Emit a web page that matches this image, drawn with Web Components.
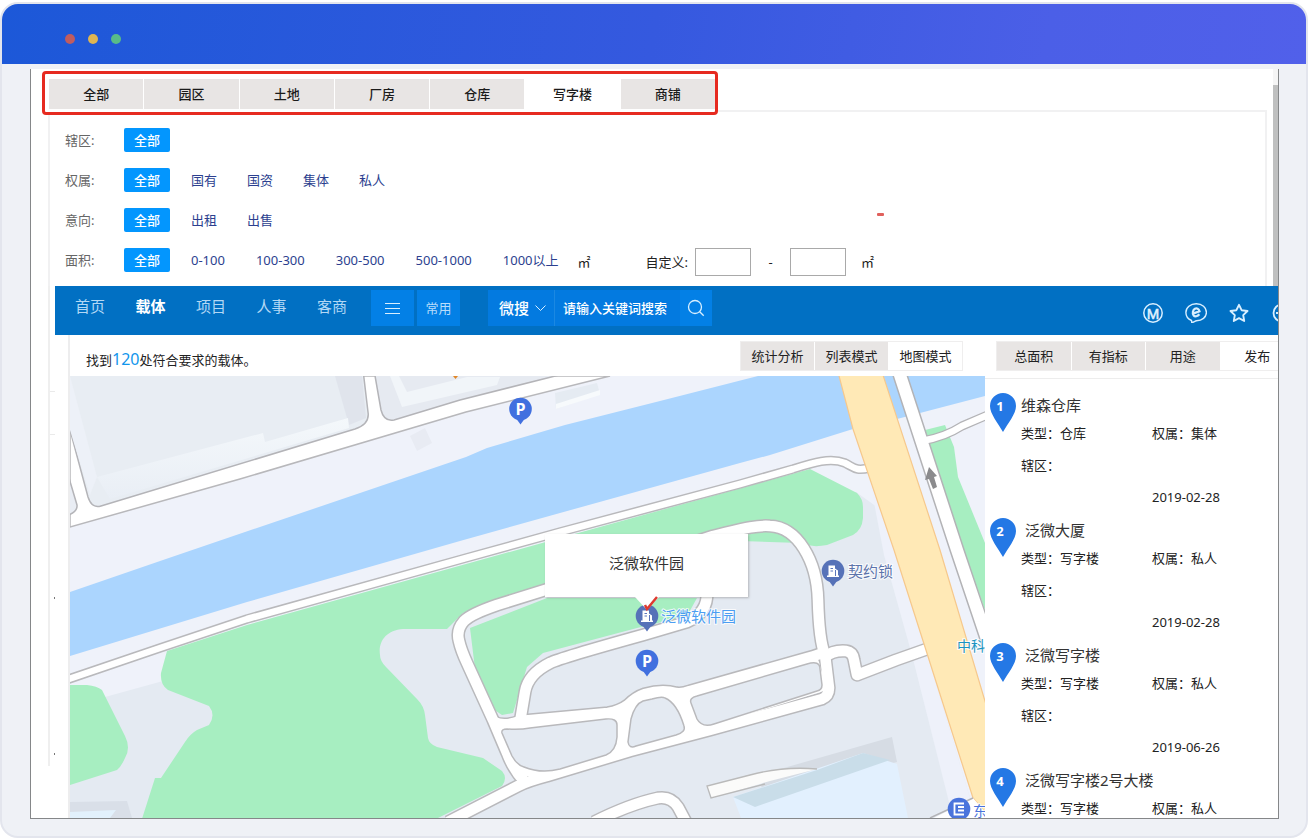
<!DOCTYPE html>
<html lang="zh-CN">
<head>
<meta charset="utf-8">
<title>载体管理</title>
<style>
  body { margin: 0; background: #fff; color: #222; font: 13px/20px "Noto Sans", "Noto Sans CJK SC", sans-serif; }
</style>
</head>
<body>
<app-window>
  <filter-board>
    <tab-strip slot="tabs" items="全部,园区,土地,厂房,仓库,写字楼,商铺" current="写字楼"></tab-strip>
    <filter-row label="辖区:"></filter-row>
    <filter-row label="权属:" items="国有,国资,集体,私人"></filter-row>
    <filter-row label="意向:" items="出租,出售"></filter-row>
    <filter-row label="面积:" items="0-100,100-300,300-500,500-1000,1000以上">
      <range-field></range-field>
    </filter-row>
  </filter-board>
  <side-rail slot="lower"></side-rail>
  <place-browser slot="lower">
    <main-nav slot="nav"></main-nav>
    <result-bar slot="bar" count="120"></result-bar>
    <map-view slot="map">泛微软件园</map-view>
    <place-list slot="list">
      <place-card no="1" kind="仓库" owner="集体" date="2019-02-28">维森仓库</place-card>
      <place-card no="2" kind="写字楼" owner="私人" date="2019-02-28"> 泛微大厦</place-card>
      <place-card no="3" kind="写字楼" owner="私人" date="2019-06-26"> 泛微写字楼</place-card>
      <place-card no="4" kind="写字楼" owner="私人"> 泛微写字楼2号大楼</place-card>
    </place-list>
  </place-browser>
</app-window>

<script>
const base = `<style>
  *, *::before, *::after { box-sizing: border-box; }
  button, input, select { font: inherit; color: inherit; margin: 0; padding: 0; border: 0; border-radius: 0; background: none; outline: none; }
  a { color: inherit; text-decoration: none; }
  :host { box-sizing: border-box; }
</style>`;
function define(name, render) {
  customElements.define(name, class extends HTMLElement {
    connectedCallback() {
      if (!this.shadowRoot) this.attachShadow({ mode: "open" }).innerHTML = base + render(this);
    }
  });
}
const list = (el, attr) => (el.getAttribute(attr) || "").split(",").filter(Boolean);

define("app-window", () => `<style>
  :host { display: flex; flex-direction: column; height: calc(100vh - 2px); margin-top: 2px; min-height: 480px;
    border: 2px solid #e3e5ed; border-radius: 18px; background: #eff1f6; overflow: hidden; }
  header { display: flex; align-items: center; gap: 13px; flex: none; height: 60px; padding: 10px 0 0 63px;
    background: linear-gradient(100deg, #1c58d8, #3559df 50%, #4b5fe7 80%, #5160ea); }
  i { width: 10px; height: 10px; border-radius: 50%; background: #c05c60; }
  i:nth-child(2) { background: #dfb552; } i:nth-child(3) { background: #58bc88; }
  main { flex: 1; min-height: 0; display: flex; flex-direction: column; margin: 5px 27px 17px 28px;
    border: 1px solid #858789; border-top: 0; background: #fff; overflow: hidden; }
  .lower { flex: 1; min-height: 0; display: flex; }
</style><header><i></i><i></i><i></i></header><main><slot></slot><div class="lower"><slot name="lower"></slot></div></main>`);

define("filter-board", () => `<style>
  :host { display: flex; flex: none; }
  .main { flex: 1; min-width: 0; padding: 2px 6px 0 17px; }
  .panel { position: relative; margin-top: -5px; padding: 8px 0 6px 15px; border: 2px solid #f1f1f2; border-bottom: 0; }
  .mark { position: absolute; left: 827px; top: 101px; width: 7px; height: 3px; background: #e0605c; border-radius: 1px; }
  .track { width: 5px; padding-top: 16px; background: #f5f5f5; display: flex; }
  .track i { flex: 1; background: #bfc0c0; }
</style><div class="main"><slot name="tabs"></slot><div class="panel"><slot></slot><span class="mark"></span></div></div>
<div class="track"><i></i></div>`);

define("tab-strip", el => `<style>
  :host { position: relative; z-index: 1; display: grid; grid-auto-flow: column; grid-auto-columns: 1fr; gap: 1px;
    width: 676px; margin-left: -6px; padding: 5px 0 3px 4px; border: 3px solid #e62a20; border-radius: 4px; background: #fff; }
  button { height: 30px; background: #e8e5e4; font-weight: 500; color: #1b1b1b; }
  button[aria-selected=true] { background: #fff; }
</style>${list(el, "items").map(t => `<button role="tab" aria-selected="${t === el.getAttribute("current")}">${t}</button>`).join("")}`);

define("filter-row", el => `<style>
  :host { display: flex; align-items: center; height: 40px; color: #2c3f8f; }
  .label { width: 59px; color: #666; }
  .all { width: 46px; height: 24px; background: #0396fe; color: #fff; border-radius: 2px; font-weight: 500; }
  nav { display: flex; gap: 31px; padding-left: 21px; }
  nav.text { gap: 30px; }
</style><span class="label">${el.getAttribute("label")}</span><button class="all">全部</button>
<nav class="${el.children.length ? "" : "text"}">${list(el, "items").map(t => `<a href="#">${t}</a>`).join("")}</nav><slot></slot>`);

define("range-field", () => `<style>
  :host { display: flex; align-items: center; color: #222; padding: 3px 0 0 19px; }
  label { margin: 0 7px 0 55px; }
  input { width: 56px; height: 28px; border: 1px solid #a9a9a9; background: #fff; }
  .dash { width: 39px; text-align: center; }
  .unit { margin-left: 15px; }
</style><span>㎡</span><label for="from">自定义:</label><input id="from"><span class="dash">-</span><input aria-label="最大面积"><span class="unit">㎡</span>`);

define("side-rail", () => `<style>
  :host { flex: none; width: 24px; }
  svg { display: block; }
</style><svg width="24" height="480" viewBox="31 286 24 480"><path d="M49 286V766" stroke="#efefef" stroke-width="2"/>
<path d="M50 391.500h6M50 434.500h6" stroke="#eaeaea"/><path d="M54 598h1M54 754h1" stroke="#777" stroke-width="2"/></svg>`);

define("place-browser", () => `<style>
  :host { flex: 1; min-width: 0; display: flex; flex-direction: column; }
  .work { flex: 1; min-height: 0; display: flex; margin-left: 13px; border-left: 2px solid #ededee; background: #fff; }
  .left { flex: 1; min-width: 0; display: flex; flex-direction: column; }
</style><slot name="nav"></slot><div class="work"><div class="left"><slot name="bar"></slot><slot name="map"></slot></div><slot name="list"></slot></div>`);

define("main-nav", () => `<style>
  :host { display: flex; flex: none; align-items: flex-start; height: 49px; padding: 4px 0 0 20px; background: #0170c3; color: #fff; overflow: hidden; }
  nav { display: flex; justify-content: space-between; width: 272px; margin-right: 24px; font-size: 15px; line-height: 32px; color: #b3d8f5; }
  nav a[aria-current] { color: #fff; font-weight: 700; }
  button { display: grid; place-items: center; height: 36px; background: #0380e6; }
  .tool { width: 43px; margin-right: 3px; color: #b8dcfb; }
  form { display: flex; width: 224px; height: 36px; margin: 0 0 0 25px; background: #037ae0; }
  .pick { position: relative; width: 67px; border-right: 1px solid #1b88e2; }
  select { appearance: none; width: 100%; height: 36px; padding-left: 11px; font-size: 15px; font-weight: 500; }
  .pick svg { position: absolute; right: 8px; top: 15px; pointer-events: none; }
  input { flex: 1; min-width: 0; padding-left: 8px; font-weight: 500; }
  input::placeholder { color: #fff; opacity: 1; }
  form button { width: 32px; }
  .icons { display: flex; gap: 21px; margin: 12px -15px 0 auto; }
  .icons a { display: block; width: 22px; height: 22px; }
  svg { display: block; fill: none; stroke: #d9efff; }
  svg text { fill: #e2f3ff; stroke: none; font: 15px "Liberation Sans", sans-serif; text-anchor: middle; }
</style>
<nav><a href="#">首页</a><a href="#" aria-current="page">载体</a><a href="#">项目</a><a href="#">人事</a><a href="#">客商</a></nav>
<button class="tool" aria-label="菜单"><svg width="16" height="12"><path d="M0 1.500h15M0 6.500h15M0 11.500h15"/></svg></button>
<button class="tool">常用</button>
<form><span class="pick"><select aria-label="搜索范围"><option>微搜</option></select><svg width="11" height="7"><path d="M.5 .5l5 5 5-5"/></svg></span>
<input type="search" aria-label="搜索" placeholder="请输入关键词搜索"><button type="button" aria-label="搜索"><svg width="18" height="18" stroke-width="1.300"><circle cx="8" cy="8" r="6.500"/><path d="M12.700 12.700l4 4"/></svg></button></form>
<div class="icons">
<a href="#" aria-label="M"><svg width="22" height="22" stroke-width="1.500"><circle cx="11" cy="11" r="9.200"/><text x="11" y="16.500" stroke="#e2f3ff" style="stroke:#e2f3ff;stroke-width:.5">M</text></svg></a>
<a href="#" aria-label="e"><svg width="22" height="22" stroke-width="1.400"><path d="M6.500 18.500C3 17 .9 14 .9 10.500.9 5.500 5.400 1.800 11.300 1.800S21.400 5.500 21.400 10.400 17 18.600 11.500 18.800c-1.700.1-2.800 1.600-4.800 1.500z"/><path d="M7.800 11.600l6.700-2.300C13.800 6.600 11.700 5.900 9.900 6.800 7.800 8 7.200 11.300 8.500 13.200c1.400 1.800 4.200 1.200 5.900-.9" stroke-width="2.200"/></svg></a>
<a href="#" aria-label="收藏"><svg width="22" height="22" stroke-width="1.900" stroke-linejoin="round"><path d="M11 2.800l2.600 5.400 5.900.8-4.300 4.100 1 5.900L11 16.200 5.800 19l1-5.900L2.500 9l5.900-.8z"/></svg></a>
<a href="#" aria-label="更多"><svg width="22" height="22" stroke-width="1.800"><circle cx="11" cy="11" r="8.500"/><path d="M5 11h12"/></svg></a>
</div>`);

const segStyle = `
  .seg { display: flex; gap: 1px; height: 30px; border: 1px solid #efeeee; }
  .seg button { width: 73px; background: #e8e5e4; color: #222; }
  .seg button[aria-pressed=true] { background: #fff; }`;
const seg = (names, on) => names.map(n => `<button aria-pressed="${n === on}">${n}</button>`).join("");

define("result-bar", el => `<style>
  :host { display: flex; flex: none; height: 41px; padding-left: 16px; color: #222; }
  p { margin: 0; padding-top: 13px; line-height: 24px; } b { font-weight: 400; font-size: 16px; line-height: 20px; color: #1296ec; }
  .seg { margin: 6px 22px 0 auto; }${segStyle}
</style><p>找到<b>${el.getAttribute("count")}</b>处符合要求的载体。</p><div class="seg">${seg(["统计分析", "列表模式", "地图模式"], "地图模式")}</div>`);

define("place-list", () => `<style>
  :host { display: flex; flex-direction: column; flex: none; width: 293px; overflow: hidden; }
  .head { flex: none; height: 44px; padding: 6px 0 0 11px; border-bottom: 1px solid #ededed; overflow: hidden; }${segStyle}
  .head .seg { width: 299px; } .head button { flex: 1; }
  .items { display: flex; flex-direction: column; gap: 10px; padding: 14px 0 0 5px; }
</style><div class="head"><div class="seg">${seg(["总面积", "有指标", "用途", "发布"], "发布")}</div></div><div class="items"><slot></slot></div>`);

define("place-card", el => {
  const date = el.getAttribute("date");
  return `<style>
  :host { display: flex; flex: none; gap: 5px; color: #333; }
  svg { display: block; flex: none; }
  svg text { font: 700 13px "Noto Sans", sans-serif; fill: #fff; text-anchor: middle; }
  article { flex: 1; padding-top: 2px; }
  h3 { margin: 0 0 8px; font-size: 15px; font-weight: 400; line-height: 20px; white-space: pre; }
  .row { display: grid; grid-template-columns: 131px 1fr; margin-bottom: 12px; color: #222; }
  .row:last-child { margin: 0 0 1px; } .date { grid-column: 2; }
</style><svg width="26" height="39"><path d="M13 0a13 13 0 0 1 13 13c0 8-8 17-13 26C8 30 0 21 0 13A13 13 0 0 1 13 0z" fill="#2478e5"/><text x="10" y="18">${el.getAttribute("no")}</text></svg>
<article><h3><slot></slot></h3><div class="row"><span>类型：${el.getAttribute("kind")}</span><span>权属：${el.getAttribute("owner")}</span></div>
${date ? `<div class="row"><span>辖区：</span></div><div class="row"><time class="date">${date}</time></div>` : ""}</article>`;
});

const pin = (x, y, color, inner) => `<g transform="translate(${x} ${y})"><path d="M-4 10L0 15.500 4 10z" fill="${color}"/><circle r="11.300" fill="${color}"/>${inner}</g>`;
const tower = `<path d="M-6 6V4.500h1.500V-5.500h6.500v3l3 2v5H6V6z" fill="#fff"/><path d="M-2.500-2.500h2.500M-2.500 0h2.500M2.500-1v6" stroke="#5b76bb"/>`;
const park = `<text y="6" text-anchor="middle" class="p">P</text>`;

define("map-view", () => `<style>
  :host { position: relative; display: block; flex: 1; min-height: 0; overflow: hidden; background: #eff2fa; }
  svg.map { display: block; width: 100%; height: 100%; }
  .road { fill: none; stroke-linejoin: round; }
  .poi { font-size: 15px; paint-order: stroke; stroke: #fff; stroke-width: 2px; stroke-opacity: .8; }
  .poi.small { font-size: 14px; }
  .p { font: 700 16px "Open Sans", "Noto Sans", sans-serif; fill: #fff; }
  .tip { position: absolute; left: 475px; top: 158px; width: 203px; height: 63px; line-height: 58px; text-align: center;
    font-size: 15px; color: #333; background: #fff; box-shadow: 1px 1px 2px #8888; }
  .tip svg { position: absolute; left: 90px; top: 61px; }
</style>
<svg class="map" viewBox="70 376 915 442" preserveAspectRatio="xMinYMin slice">
<defs>
 <g id="campus">
  <path d="M448 822L518 786Q528 781 547 776L630 751 710 730 822 699Q829 696 829 688L825 655Q819 640 818 600C817 560 797 527 770 526C755 525 742 529 713 536L545 590 497 605Q471 614 464 621Q456 630 459 641Q461 650 467 663L493 720 507 753Q513 769 524 781"/>
  <path d="M494 722Q504 727 520 721L608 713Q620 711 628 705 636 697 645 694 662 689 676 693 682 694 690 691L807 658Q822 654 827 650"/>
  <path d="M520 722L525 692Q528 674 550 663Q560 658 643 635L687 622Q708 613 707 592"/>
  <path d="M825 657Q833 650 846 651 853 652 854 660L857 675 896 660 930 648"/>
  <path d="M594 822Q630 804 658 798 671 796 678 807L686 822"/>
 </g>
 <path id="bank" d="M66 680L160 648 247 619 466 558 560 532 740 484 793 469C812 463 830 457 845 463 855 468 855 471 870 468"/>
 <g id="avenue"><path d="M899 372L957 550 990 648"/></g>
 <linearGradient id="face" x2="0" y2="1"><stop stop-color="#f4f8fb"/><stop offset="1" stop-color="#e9eef5"/></linearGradient>
</defs>
<path d="M70 376H610L466 412 240 479 70 527z" fill="#fff" stroke="#b8b8bb" stroke-width="1.500"/>
<path d="M66 415L88 497Q92 509 101 506L355 429Q370 424 368 412L363 370H66z" fill="#e8edf3" stroke="#b4b4b8" stroke-width="1.500"/>
<path d="M335 376L349 425 366 418 362 376z" fill="#e0e4ec"/><path d="M70 376L97 477 90 495 70 430z" fill="#edf1f8"/>
<path d="M97 477L263 433 265 442 348 418 349 428 110 499z" fill="url(#face)"/>
<path d="M66 468L77 505Q78 512 66 516" fill="#e9edf4" stroke="#b4b4b8" stroke-width="1.500"/>
<path d="M374 370L381 410Q384 422 394 420L460 400 575 371z" fill="#e6eaf1" stroke="#b4b4b8" stroke-width="1.500"/>
<path d="M390 376h9l8 16 60-15h33l-3 8-95 22z" fill="#f1f5f9"/>
<path d="M555 393L597 383 600 394 556 409z" fill="#e5ebf2"/><path d="M556 404L600 390v5l-44 14z" fill="#f7fafc"/>
<path d="M410 436L425 428 432 443 417 451z" fill="#e8ebf3"/>
<path d="M453 376h5l-2.500 3z" fill="#e18728"/>
<path d="M70 592L163 560 257 528 466 457 487 448 565 425 660 401 758 376H985V396L897 419 853 429 770 455 740 463 560 513 460 541 247 602 70 656z" fill="#abd5fe"/>
<path d="M70 710L105 697 163 681 540 570 780 492 856 492 884 512 925 647 976 818H70z" fill="#e4eaf2"/>
<path d="M868 471L880 470 895 553 925 647 976 818H953L912 655 884 555z" fill="#eef1fa"/>
<g fill="#a7eec1">
 <path d="M167 651L247 625 466 564 560 538 810 469 857 493Q863 499 863 507V518Q862 530 853 535L827 545Q812 548 800 543L710 540 545 587 463 613 447 629H403C386 630 378 642 380 655Q380 661 386 667L417 699Q424 706 425 715L428 738Q429 744 437 747L483 758 502 771Q508 778 502 786L430 822H141L155 778H161L185 742Q190 734 197 730L209 725Q216 715 209 706L168 690Q160 685 161 673z"/>
 <path d="M70 685H87Q97 686 102 690L125 736Q131 748 125 758 121 767 117 770L70 785z"/>
 <path d="M470 628L547 598H697L687 616 637 628 543 653 527 667 513 713 502 715 490 707 476 677z"/>
 <path d="M925 430L945 425 954 447 958 477 985 543V610L960 540z"/>
</g>
<path d="M70 802L127 801 132 818H70z" fill="#d9dfe8"/><path d="M70 812L116 810 110 818H70z" fill="#e2f1fc"/>
<path d="M763 774L892 737 897 762 760 796z" fill="#d6dce4"/><path d="M733 797L863 753 897 764 908 818H741z" fill="#e2f0fe"/>
<path d="M733 797L817 770 863 753 890 760 755 807z" fill="#c9dde9"/>
<path d="M707 786L750 775Q783 766 817 769L770 781 712 798z" fill="#fbfbfa"/><path d="M817 769Q783 766 750 775L707 786 711 798 765 784" fill="none" stroke="#bababa" stroke-width="1.300"/>
<g class="road" stroke="#b9b9bc"><use href="#campus" stroke-width="13.500"/><use href="#bank" stroke-width="9.500"/></g>
<g class="road" stroke="#fff"><use href="#campus" stroke-width="10.500"/><use href="#bank" stroke-width="6.500"/></g>
<path d="M503 724L610 713 645 695 680 693 818 659 827 690 630 751 547 776 522 776z" fill="#fff"/>
<g fill="#e4eaf2" stroke="#b9b9bc" stroke-width="1.500">
 <path d="M502 733Q501 729 507 729 520 730 530 728L606 719Q617 718 617 725V737Q616 751 606 755L560 769Q541 774 524 767 517 765 512 756z"/>
 <path d="M628 742Q629 749 636 746L676 735Q686 732 684 726 677 703 665 698 662 696 652 699L643 701Q635 704 631 719z"/>
 <path d="M691 703Q689 698 697 696L807 664Q820 660 820 669L822 685Q822 690 817 691L714 724Q702 728 697 719z"/>
</g>
<path d="M838 372L853 429 894 550 925 647 973 798 990 818V718L940 550 882 372z" fill="#ffe9b6" stroke="#f6c88c" stroke-width="1.200"/>
<path d="M930 820L973 798 990 818V822z" fill="#fff"/><path d="M930 818L973 798" stroke="#b3b3b6" stroke-width="1.500"/>
<g class="road" stroke="#b3b3b6"><use href="#avenue" stroke-width="15"/><path d="M922 441Q945 437 962 426L990 414" stroke-width="9"/></g>
<g class="road" stroke="#fff"><use href="#avenue" stroke-width="12"/><path d="M922 441Q945 437 962 426L990 414" stroke-width="6.500"/></g>
<path d="M929 467L937 476 934 477 937 487 933 489 929 479 925 480z" fill="#8b8b8d"/>
${pin(520.500, 409, "#4170df", park)}${pin(647, 661, "#4170df", park)}
${pin(833, 571, "#5672b8", tower)}${pin(647, 616, "#5672b8", tower)}
${pin(959, 809, "#4a74dc", `<path d="M5-5.500H-4.500V5.500H5M-1-2h6M-1 1.500h6" fill="none" stroke="#fff" stroke-width="1.800"/>`)}
<text class="poi" x="848" y="577" fill="#5c74ab">契约锁</text>
<text class="poi" x="661" y="622" fill="#4b9df2">泛微软件园</text>
<text class="poi small" x="957" y="651" fill="#1b94c2">中科</text>
<text class="poi small" x="973" y="816" fill="#4a74dc">东</text>
</svg>
<div class="tip"><slot></slot><svg width="24" height="18"><path d="M0 2h24L12 15z" fill="#fff"/><path d="M22 2L12 14 10 10" fill="none" stroke="#dd3a30" stroke-width="2.500"/></svg></div>`);
</script>
</body>
</html>
